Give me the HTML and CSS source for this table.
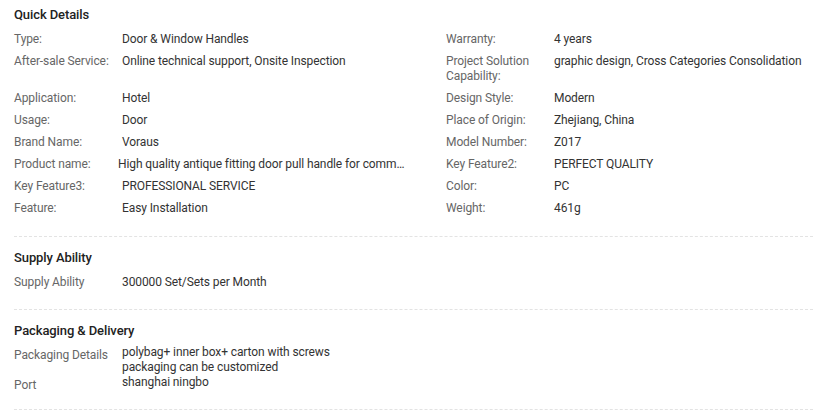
FILE: index.html
```html
<!doctype html>
<html>
  <head>
    <meta charset="utf-8">
    <title>Product Details</title>
    <link rel="stylesheet" href="styles.css">
  </head>
  <body>
    <div class="details">
      <div class="section first">
        <h3 class="section-title">Quick Details</h3>
        <div class="attrs">
          <div class="attr"><span class="attr-name">Type:</span><span class="attr-value">Door &amp; Window Handles</span></div>
          <div class="attr"><span class="attr-name">Warranty:</span><span class="attr-value">4 years</span></div>
          <div class="attr"><span class="attr-name">After-sale Service:</span><span class="attr-value">Online technical support, Onsite Inspection</span></div>
          <div class="attr"><span class="attr-name">Project Solution Capability:</span><span class="attr-value">graphic design, Cross Categories Consolidation</span></div>
          <div class="attr"><span class="attr-name">Application:</span><span class="attr-value">Hotel</span></div>
          <div class="attr"><span class="attr-name">Design Style:</span><span class="attr-value">Modern</span></div>
          <div class="attr"><span class="attr-name">Usage:</span><span class="attr-value">Door</span></div>
          <div class="attr"><span class="attr-name">Place of Origin:</span><span class="attr-value">Zhejiang, China</span></div>
          <div class="attr"><span class="attr-name">Brand Name:</span><span class="attr-value">Voraus</span></div>
          <div class="attr"><span class="attr-name">Model Number:</span><span class="attr-value">Z017</span></div>
          <div class="attr"><span class="attr-name">Product name:</span><span class="attr-value ellipsis">High quality antique fitting door pull handle for commercial building</span></div>
          <div class="attr"><span class="attr-name">Key Feature2:</span><span class="attr-value">PERFECT QUALITY</span></div>
          <div class="attr"><span class="attr-name">Key Feature3:</span><span class="attr-value">PROFESSIONAL SERVICE</span></div>
          <div class="attr"><span class="attr-name">Color:</span><span class="attr-value">PC</span></div>
          <div class="attr"><span class="attr-name">Feature:</span><span class="attr-value">Easy Installation</span></div>
          <div class="attr"><span class="attr-name">Weight:</span><span class="attr-value">461g</span></div>
        </div>
      </div>
      <div class="section">
        <h3 class="section-title">Supply Ability</h3>
        <div class="attr"><span class="attr-name">Supply Ability</span><span class="attr-value">300000 Set/Sets per Month</span></div>
      </div>
      <div class="section packaging">
        <h3 class="section-title">Packaging &amp; Delivery</h3>
        <div class="attr"><span class="attr-name">Packaging Details</span><span class="attr-value">polybag+ inner box+ carton with screws<br>packaging can be customized</span></div>
        <div class="attr"><span class="attr-name">Port</span><span class="attr-value">shanghai ningbo</span></div>
      </div>
    </div>
  </body>
</html>
```

FILE: styles.css
```css
body {
  margin: 0;
  font-family: Roboto, "Liberation Sans", Arial, sans-serif;
  font-size: 12px;
  letter-spacing: -0.1px;
  color: #333;
  background: #fff;
}
.details {
  margin: 0 2px 0 14px;
}
.section {
  padding: 11px 0 16px;
  border-bottom: 1px dashed #e3e3e3;
}
.section.first {
  padding-top: 5px;
  padding-bottom: 17px;
}
.section-title {
  margin: 0 0 3px;
  font-size: 13px;
  line-height: 20px;
  font-weight: 500;
  color: #222;
}
.attrs {
  display: grid;
  grid-template-columns: 432px 1fr;
}
.attr {
  display: flex;
  align-items: flex-start;
  line-height: 15px;
  padding: 3.5px 0;
}
.attr-name {
  flex: none;
  width: 100px;
  margin-right: 8px;
  color: #666;
}
.attr-value {
  color: #333;
}
.attr-value.ellipsis {
  margin-left: -4px;
  width: 292px;
  white-space: nowrap;
  overflow: hidden;
  text-overflow: ellipsis;
}
.packaging {
  padding-bottom: 14px;
}
.packaging .section-title {
  margin-bottom: 4px;
}
.packaging .attr {
  padding: 0;
}
.packaging .attr-name {
  line-height: 20px;
}
```
